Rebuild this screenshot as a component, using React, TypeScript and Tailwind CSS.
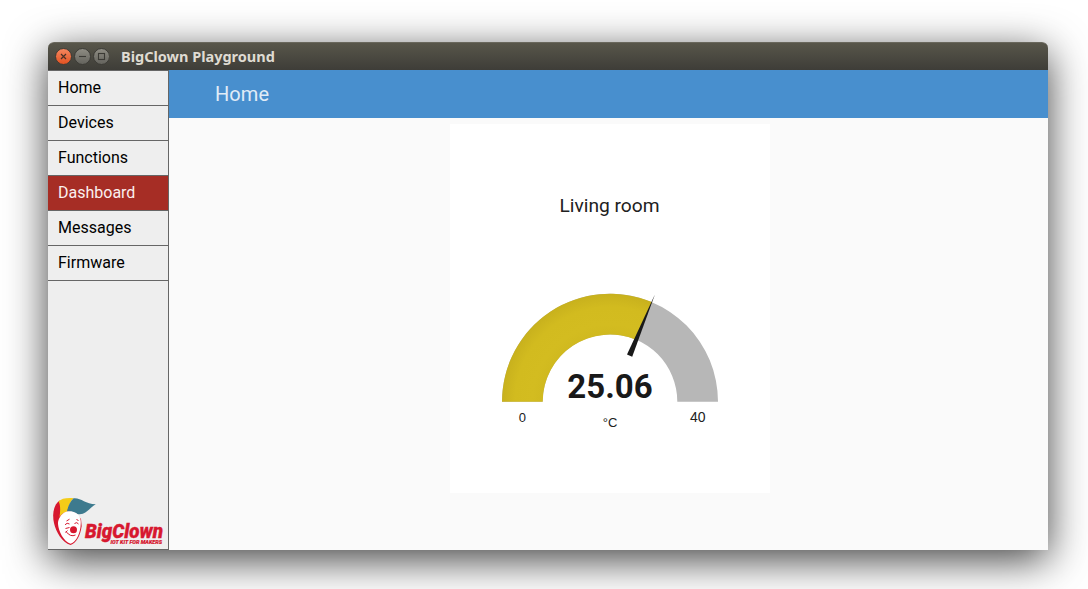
const items = ["Home", "Devices", "Functions", "Dashboard", "Messages", "Firmware"];

function WindowButtons() {
  return (
    <svg width="54" height="18" viewBox="0 0 54 18" aria-hidden="true">
      <defs>
        <linearGradient id="close" x1="0" y1="0" x2="0" y2="1">
          <stop offset="0" stopColor="#f68961" />
          <stop offset="1" stopColor="#e2501f" />
        </linearGradient>
        <linearGradient id="plain" x1="0" y1="0" x2="0" y2="1">
          <stop offset="0" stopColor="#8f8d84" />
          <stop offset="1" stopColor="#63625c" />
        </linearGradient>
      </defs>
      <circle cx="8.5" cy="8.5" r="8" fill="url(#close)" stroke="#3b3a35" />
      <path d="M6 6l5 5M11 6l-5 5" stroke="#4a3127" strokeWidth="1.2" />
      <circle cx="27.5" cy="8.5" r="8" fill="url(#plain)" stroke="#3b3a35" />
      <path d="M24 8.500h7" stroke="#3b3a35" strokeWidth="1.1" />
      <circle cx="46.5" cy="8.5" r="8" fill="url(#plain)" stroke="#3b3a35" />
      <rect x="43.5" y="5.5" width="6" height="6" fill="none" stroke="#3b3a35" strokeWidth="1.1" />
    </svg>
  );
}

function Logo() {
  return (
    <svg className="overflow-visible" width="120" height="60" viewBox="0 0 120 60">
      <path d="M11.500 11.500C5.500 16 4 25 6 34C8 43 14 53.500 22.500 56C28.500 54 32.500 46 33.700 37L33 30L26 22Z" fill="#d7182f" />
      <path d="M10.700 12.500C13 9.500 18 8.500 25.500 9C22 13 20 18 19.500 22.500C15 23.500 12.500 26 11.500 28C12.500 22 12.500 16 10.700 12.500Z" fill="#f4cc18" />
      <path d="M25.500 9.300C33 8.500 37 15 47.800 15.200C41 19 38 26.500 29.500 25C26 23.300 22.500 22 19 22.700C20 17 22 13 25.500 9.300Z" fill="#3d7a8e" />
      <path d="M12 28C15.500 21.500 23 21 28 24C33 27 33.300 32 32.500 38C31.500 46 27.500 53.500 22.500 54.800C15.500 52.500 10.500 42 10 35C9.800 32 10.800 30 12 28Z" fill="#fff" />
      <circle cx="25.500" cy="40.800" r="3.500" fill="#d7182f" />
      <path d="M17 35.800q2-2.700 4.500-0.800M26.500 34.500q2.500-2 4 0.500M18.500 32l3-1.800M28.500 30.500l2 1M17.500 39.500l4-1M18 42.500q4.500 6 9.500 3.500M19.500 41.500l-2 2" fill="none" stroke="#d7182f" strokeWidth="1" />
      <text x="37" y="48.500" textLength="78" lengthAdjust="spacingAndGlyphs" fontFamily="Roboto, sans-serif" fontSize="20.500" fontWeight="900" fontStyle="italic" fill="#d7182f" stroke="#d7182f" strokeWidth="0.4">BigClown</text>
      <text x="62.500" y="54.500" textLength="51.500" lengthAdjust="spacingAndGlyphs" fontFamily="Roboto, sans-serif" fontSize="5.500" fontWeight="900" fontStyle="italic" fill="#d7182f" stroke="#d7182f" strokeWidth="0.2">IOT KIT FOR MAKERS</text>
    </svg>
  );
}

function Gauge() {
  return (
    <svg width="320" height="369" viewBox="0 0 320 369">
      <defs>
        <radialGradient id="level" gradientUnits="userSpaceOnUse" cx="160" cy="278" r="108">
          <stop offset="0.62" stopColor="#d0b91f" />
          <stop offset="0.72" stopColor="#d3bc20" />
          <stop offset="0.88" stopColor="#d2bb1f" />
          <stop offset="1" stopColor="#c8b11d" />
        </radialGradient>
      </defs>
      <path d="M52 277.700A108 108 0 0 1 268 277.700H227.300A67.300 67.300 0 0 0 92.700 277.700Z" fill="#b7b7b7" />
      <path d="M52 277.700A108 108 0 0 1 201.800 178.100L186 215.800A67.300 67.300 0 0 0 92.700 277.700Z" fill="url(#level)" />
      <path d="M204.900 170.500L182.200 232.800L177 230.600Z" fill="#191919" />
      <text x="159.500" y="88" textAnchor="middle" fontFamily="Roboto, sans-serif" fontSize="19.200" fill="#212121">Living room</text>
      <text x="160" y="274" textAnchor="middle" fontFamily="Roboto, sans-serif" fontSize="33" fontWeight="700" fill="#191919">25.06</text>
      <text x="72.300" y="298" textAnchor="middle" fontFamily="Liberation Sans, sans-serif" fontSize="13" fill="#212121">0</text>
      <text x="160" y="303" textAnchor="middle" fontFamily="Liberation Sans, sans-serif" fontSize="13" fill="#212121">°C</text>
      <text x="247.800" y="298" textAnchor="middle" fontFamily="Liberation Sans, sans-serif" fontSize="14" fill="#212121">40</text>
    </svg>
  );
}

export default function App() {
  return (
    <div className="h-[589px] w-[1088px] overflow-hidden bg-white pt-[42px] pl-12 font-['Roboto',sans-serif]">
      <div className="flex h-[508px] w-[1000px] flex-col rounded-t-[6px] shadow-[0_10px_42px_rgba(0,0,0,0.75)]">
        <header className="flex h-7 shrink-0 items-center gap-[12px] rounded-t-[6px] border-t border-[#69675c] bg-linear-to-b from-[#58564a] to-[#3e3d38] pl-[7px]">
          <WindowButtons />
          <span className="pb-0.5 font-['Noto_Sans',sans-serif] text-[14.5px] leading-5 font-bold text-[#dfdbd2]">BigClown Playground</span>
        </header>
        <div className="flex min-h-0 flex-1">
          <aside className="flex w-[121px] shrink-0 flex-col justify-between border-y border-r border-[#666] bg-[#eee]">
            <nav>
              {items.map((item) => (
                <div
                  key={item}
                  className={`h-[35px] border-b border-[#666] pl-2.5 text-base leading-[34px] ${item === "Dashboard" ? "bg-[#a62d25] text-[#fbf0ef]" : "text-black"}`}
                >
                  {item}
                </div>
              ))}
            </nav>
            <Logo />
          </aside>
          <main className="flex flex-1 flex-col bg-[#fafafa]">
            <div className="h-12 bg-[#488fce] pl-[46px] text-xl leading-[48px] tracking-[0.1px] text-[#e0ecf7]">Home</div>
            <section className="mt-1.5 ml-[281px] h-[369px] w-80 bg-white">
              <Gauge />
            </section>
          </main>
        </div>
      </div>
    </div>
  );
}
